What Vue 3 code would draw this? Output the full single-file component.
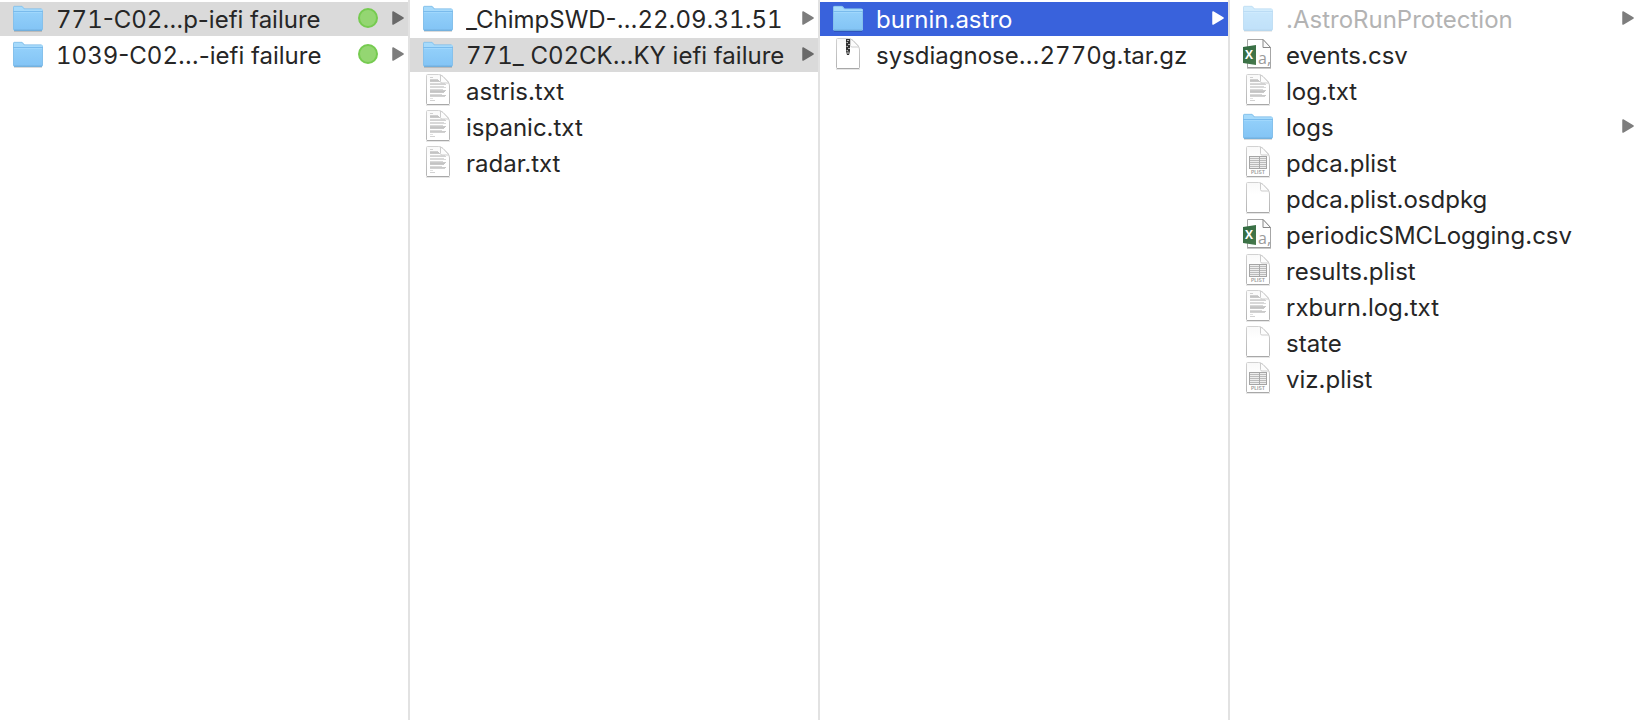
<script setup>
import { ref } from 'vue'

const columns = ref([
  {
    selected: 0,
    items: [
      { name: '771-C02…p-iefi failure', kind: 'folder', tag: true },
      { name: '1039-C02…-iefi failure', kind: 'folder', tag: true },
    ],
  },
  {
    selected: 1,
    items: [
      { name: '_ChimpSWD-…22.09.31.51', kind: 'folder' },
      { name: '771_ C02CK…KY iefi failure', kind: 'folder' },
      { name: 'astris.txt', kind: 'txt' },
      { name: 'ispanic.txt', kind: 'txt' },
      { name: 'radar.txt', kind: 'txt' },
    ],
  },
  {
    selected: 0,
    active: true,
    items: [
      { name: 'burnin.astro', kind: 'folder' },
      { name: 'sysdiagnose…2770g.tar.gz', kind: 'zip' },
    ],
  },
  {
    selected: -1,
    items: [
      { name: '.AstroRunProtection', kind: 'folder', dim: true },
      { name: 'events.csv', kind: 'csv' },
      { name: 'log.txt', kind: 'txt' },
      { name: 'logs', kind: 'folder' },
      { name: 'pdca.plist', kind: 'plist' },
      { name: 'pdca.plist.osdpkg', kind: 'blank' },
      { name: 'periodicSMCLogging.csv', kind: 'csv' },
      { name: 'results.plist', kind: 'plist' },
      { name: 'rxburn.log.txt', kind: 'txt' },
      { name: 'state', kind: 'blank' },
      { name: 'viz.plist', kind: 'plist' },
    ],
  },
])

// Splits a name so that runs of digits can be set in tabular figures
const segments = (name) => name.split(/(\d+)/).filter(Boolean)
const isDigits = (part) => /^\d+$/.test(part)

// Text lines of the document icon: [y, width, opacity]
const lines = [
  [3, 3, 0.6], [5, 8, 0.6], [6, 9, 0.8], [7, 10, 0.7], [9, 15, 0.5], [10, 16, 0.6],
  [12, 14, 0.5], [13, 16, 0.5], [15, 13, 0.5], [16, 16, 0.7], [17, 15, 0.8], [18, 14, 0.7],
  [20, 12, 0.5], [21, 16, 0.7], [22, 15, 0.6], [24, 3, 0.4], [26, 5, 0.6],
]
</script>

<template>
  <main class="browser">
    <svg class="defs" width="0" height="0" aria-hidden="true">
      <defs>
        <linearGradient id="folderFront" x1="0" y1="0" x2="0" y2="1">
          <stop offset="0" stop-color="#93d0fa" />
          <stop offset="1" stop-color="#83c4f5" />
        </linearGradient>
        <linearGradient id="pageFill" x1="0" y1="0" x2="0" y2="1">
          <stop offset="0" stop-color="#f9f9f9" />
          <stop offset="0.4" stop-color="#ffffff" />
        </linearGradient>
        <linearGradient id="pageEdge" x1="0" y1="0" x2="0" y2="1">
          <stop offset="0" stop-color="#d2d2d2" />
          <stop offset="1" stop-color="#b4b4b4" />
        </linearGradient>
        <linearGradient id="badge" x1="0" y1="0" x2="1" y2="1">
          <stop offset="0" stop-color="#2f6a40" />
          <stop offset="1" stop-color="#48794c" />
        </linearGradient>
      </defs>
    </svg>

    <ul v-for="(column, c) in columns" :key="c" class="column">
      <li v-for="(item, i) in column.items" :key="item.name">
        <button
          type="button"
          class="row"
          :class="{ selected: column.selected === i, active: column.active && column.selected === i, dim: item.dim }"
          @click="column.selected = i"
        >
          <svg class="icon" viewBox="0 0 30 34" aria-hidden="true">
            <template v-if="item.kind === 'folder'">
              <path d="M1 29.5H29" stroke="#000" stroke-opacity=".14" />
              <path d="M0 27V5.500Q0 4 1.500 4H8.500Q9.500 4 10 4.600L11.300 6.300Q11.800 6.800 12.800 6.800H28.500Q30 6.800 30 8.200V27Q30 28.500 28.500 28.500H1.500Q0 28.500 0 27Z" fill="#a6dafb" />
              <path d="M.5 9.500H29.500V27Q29.500 28 28.500 28H1.500Q.5 28 .5 27Z" fill="url(#folderFront)" />
              <path d="M0 9.500H30" stroke="#79bbed" />
              <path d="M1 10.500H29" stroke="#a0d7fc" />
              <path d="M.5 7V27Q.5 28 1.500 28H28.500Q29.500 28 29.500 27V8.500M.5 7V5.500Q.5 4.300 1.500 4.300H9L11 6.800H28.500" fill="none" stroke="#7db9e5" stroke-opacity=".7" />
              <path d="M1 28.300H29" stroke="#65a7d7" />
            </template>

            <template v-else-if="item.kind === 'csv'">
              <path d="M4.500 1.500H20L27.500 9.500V29.500H4.500Z" fill="#fff" stroke="#a6a6a6" />
              <path d="M4 30H28" stroke="#929292" />
              <path d="M20 1.500V9.500H27.500Z" fill="#fbfbfb" stroke="#898989" />
              <path d="M0 9L13 7V27L0 25Z" fill="url(#badge)" />
              <text class="excel" x="2" y="21" font-size="12">X</text>
              <text class="letter" x="15" y="26" font-size="16">a,</text>
            </template>

            <template v-else>
              <path d="M3 31.300H27" stroke="#000" stroke-opacity=".12" />
              <path d="M3.500 1.500Q3.500.5 4.500.5H15.500Q18 .5 20 2.500L25 7.500Q26.500 9.500 26.500 12V29.500Q26.500 30.500 25.500 30.500H4.500Q3.500 30.500 3.500 29.500Z" fill="url(#pageFill)" stroke="url(#pageEdge)" />
              <path d="M4 30.500H26" stroke="#a8a8a8" />

              <g v-if="item.kind === 'txt'" stroke="#b4b4b4">
                <path v-for="line in lines" :key="line[0]" :d="`M7 ${line[0]}.5h${line[1]}`" :stroke-opacity="line[2]" />
              </g>

              <template v-else-if="item.kind === 'plist'">
                <rect x="6.500" y="10.500" width="17" height="12" fill="#eee" stroke="#a5a5a5" />
                <path d="M7 12.500H23M7 14.500H23M7 16.500H23M7 18.500H23M7 20.500H23" stroke="#bbb" />
                <path d="M16.500 11V22" stroke="#aaa" />
                <text class="plist" x="15" y="28" font-size="5">PLIST</text>
              </template>

              <template v-else-if="item.kind === 'zip'">
                <path d="M13 1H17V13L16 17H14L13 13Z" fill="#303030" />
                <path d="M14 2.500H16M13.500 4.500H15M15 6.500H17M13.500 8.500H15M15 10.500H17M13.500 12.500H15" stroke="#b5b5b5" />
                <path d="M15 13.500V16" stroke="#ddd" />
              </template>
              <path d="M17.500 1V7.500Q17.500 9 19 9H26L20 2.500Z" fill="#fdfdfd" :fill-opacity="item.kind === 'zip' ? 0 : 1" stroke="#cdcdcd" />
            </template>
          </svg>
          <span class="name"><span v-for="(part, p) in segments(item.name)" :key="p" :class="{ digits: isDigits(part) }">{{ part }}</span></span>
          <span v-if="item.tag" class="tag"></span>
          <svg v-if="item.kind === 'folder'" class="arrow" viewBox="0 0 12 14" aria-hidden="true">
            <path d="M1 1L11 7L1 13Z" fill="currentColor" stroke="currentColor" stroke-width="1.500" stroke-linejoin="round" />
          </svg>
        </button>
      </li>
    </ul>
  </main>
</template>

<style>
body {
  margin: 0;
}
</style>

<style scoped>
.browser {
  display: grid;
  grid-template-columns: repeat(4, minmax(0, 1fr));
  gap: 2px;
  min-height: 100vh;
  background: #e2e2e2;
  font-family: Inter, "Liberation Sans", sans-serif;
}

.defs {
  position: absolute;
}

.column {
  display: flex;
  flex-direction: column;
  gap: 2px;
  margin: 0;
  padding: 2px 0 0;
  list-style: none;
  background: #fff;
}

.row {
  display: flex;
  align-items: center;
  width: 100%;
  height: 34px;
  padding: 0 4px 0 13px;
  border: 0;
  background: transparent;
  color: #262626;
  font: inherit;
  font-size: 24px;
  line-height: 32px;
  text-align: left;
}

.selected {
  background: #dadada;
}

.active {
  background: #3962dc;
  color: #fff;
}

.icon {
  flex: none;
  width: 30px;
  height: 34px;
  margin-right: 13px;
}

.name {
  flex: 1;
  min-width: 0;
  padding-top: 2px;
  overflow: hidden;
  white-space: pre;
}

.digits {
  font-variant-numeric: tabular-nums;
}

.tag {
  box-sizing: border-box;
  flex: none;
  width: 20px;
  height: 20px;
  margin: 0 14px 2px 0;
  border: 2px solid #76cb50;
  border-radius: 50%;
  background: #94d672;
}

.arrow {
  flex: none;
  width: 12px;
  height: 14px;
  margin-bottom: 2px;
  color: #7d7d7d;
}

.selected .arrow {
  color: #696969;
}

.active .arrow {
  color: #fff;
}

.dim .name {
  color: #b3b3b3;
}

.dim .icon {
  opacity: 0.5;
}

.excel {
  fill: #fff;
  font-family: "Open Sans", sans-serif;
  font-weight: 700;
}

.letter {
  fill: #9b9b9b;
  font-family: "Open Sans", sans-serif;
}

.plist {
  fill: #999;
  font-family: Inter, sans-serif;
  font-weight: 600;
  text-anchor: middle;
}
</style>
